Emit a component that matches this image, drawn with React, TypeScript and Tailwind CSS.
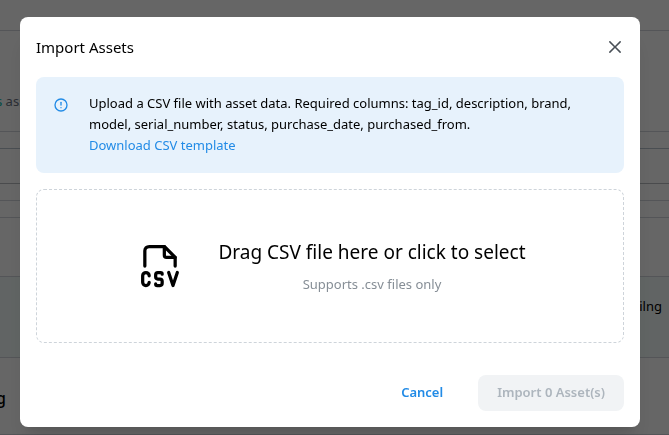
import React, { useRef, useState } from 'react';
import { TbAlertCircle, TbFileTypeCsv } from 'react-icons/tb';

const CloseIcon = () => (
  <svg className="w-5 h-5" viewBox="0 0 15 15" fill="currentColor" aria-hidden="true">
    <path
      fillRule="evenodd"
      clipRule="evenodd"
      d="M11.7816 4.03157C12.0062 3.80702 12.0062 3.44295 11.7816 3.2184C11.5571 2.99385 11.193 2.99385 10.9685 3.2184L7.50005 6.68682L4.03164 3.2184C3.80708 2.99385 3.44301 2.99385 3.21846 3.2184C2.99391 3.44295 2.99391 3.80702 3.21846 4.03157L6.68688 7.49999L3.21846 10.9684C2.99391 11.193 2.99391 11.557 3.21846 11.7816C3.44301 12.0061 3.80708 12.0061 4.03164 11.7816L7.50005 8.31316L10.9685 11.7816C11.193 12.0061 11.5571 12.0061 11.7816 11.7816C12.0062 11.557 12.0062 11.193 11.7816 10.9684L8.31322 7.49999L11.7816 4.03157Z"
    />
  </svg>
);

// Asset list that sits behind the dialog
const AssetsPage = () => (
  <div className="flex flex-col min-h-screen overflow-hidden bg-white" aria-hidden="true">
    <div className="h-[31px] border-b border-gray-300" />
    <div className="h-[101px] pt-[60px] border-b border-gray-300 text-[13px] leading-5 text-gray-500">
      <span className="-ml-1 text-teal-500">s</span> assets
    </div>
    <div className="h-[17px] border-b border-[#b8c2cc]" />
    <div className="h-[35px] border-b border-[#b8bcc0]" />
    <div className="h-[17px] border-b border-gray-300" />
    <div className="h-[17px] border-b border-gray-300" />
    <div className="h-[59px] border-b border-gray-300" />
    <div className="flex items-center justify-end h-[81px] pr-[7px] pb-5 border-b border-gray-300 bg-[#f3fbf9] text-[13px] text-black">
      ilng
    </div>
    <div className="flex items-center h-[77px] pt-1 border-b border-gray-300 text-base font-medium text-black">
      <span className="-ml-1">g</span>
    </div>
  </div>
);

interface ImportModalProps {
  onClose: () => void;
}

const ImportModal: React.FC<ImportModalProps> = ({ onClose }) => {
  const inputRef = useRef<HTMLInputElement>(null);
  const [assetCount] = useState(0);

  return (
    <div className="fixed inset-0 flex items-start justify-center overflow-y-auto bg-black/60 pt-[17px] pl-5 pr-[29px]">
      <section
        role="dialog"
        aria-modal="true"
        aria-labelledby="import-title"
        className="w-full max-w-[620px] rounded-lg bg-white shadow-xl"
      >
        <header className="flex items-center justify-between h-[60px] pl-4 pr-[11px]">
          <h2 id="import-title" className="text-[15px] text-black">Import Assets</h2>
          <button
            type="button"
            aria-label="Close"
            onClick={onClose}
            className="flex items-center justify-center w-7 h-7 text-[#495057]"
          >
            <CloseIcon />
          </button>
        </header>

        <div className="flex flex-col gap-4 px-4 pb-4">
          {/* Column hints */}
          <div className="flex gap-5 rounded-lg bg-[#e7f2fc] pt-4 pb-[17px] pl-[17px] pr-4">
            <TbAlertCircle className="w-4 h-4 mt-1 shrink-0 text-[#228be6]" />
            <div className="text-[13px] leading-[21px] text-black">
              <p>
                Upload a CSV file with asset data. Required columns: tag_id, description, brand,
                model, serial_number, status, purchase_date, purchased_from.
              </p>
              <a href="#template" className="block text-[#228be6]">Download CSV template</a>
            </div>
          </div>

          {/* Drop area */}
          <button
            type="button"
            onClick={() => inputRef.current?.click()}
            className="flex items-center justify-center gap-8 h-[154px] rounded-lg border border-dashed border-[#ced4da]"
          >
            <TbFileTypeCsv className="w-[52px] h-[52px] shrink-0 text-black" strokeWidth={1.5} />
            <span className="flex flex-col items-center gap-2">
              <span className="text-[19px] leading-7 text-black">Drag CSV file here or click to select</span>
              <span className="text-[13px] leading-[21px] text-[#868e96]">Supports .csv files only</span>
            </span>
          </button>
          <input ref={inputRef} type="file" accept=".csv" aria-label="CSV file" className="hidden" />

          <footer className="flex justify-end gap-4 pt-4 text-[13px] font-semibold">
            <button type="button" onClick={onClose} className="h-9 px-[19px] rounded-lg text-[#228be6]">
              Cancel
            </button>
            <button type="button" disabled className="h-9 px-[19px] rounded-lg bg-[#f1f3f5] text-[#adb5bd]">
              Import {assetCount} Asset(s)
            </button>
          </footer>
        </div>
      </section>
    </div>
  );
};

export default function App() {
  const [opened, setOpened] = useState(true);

  return (
    <div className="font-['Noto_Sans','Open_Sans',sans-serif]">
      <AssetsPage />
      {opened && <ImportModal onClose={() => setOpened(false)} />}
    </div>
  );
}
